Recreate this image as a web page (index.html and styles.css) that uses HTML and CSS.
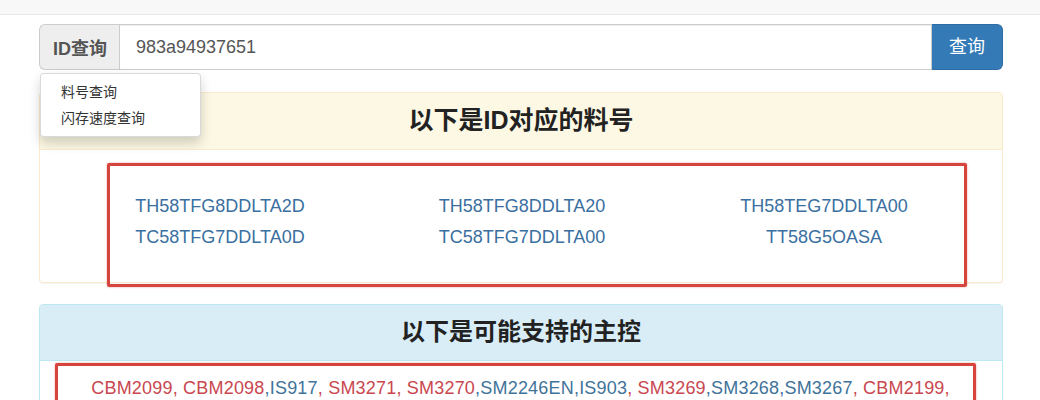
FILE: index.html
```html
<!DOCTYPE html>
<html lang="zh-CN">
<head>
<meta charset="utf-8">
<title>ID查询</title>
<link rel="stylesheet" href="styles.css">
</head>
<body>
<div class="topbar"></div>
<div class="container">
  <div class="search">
    <div class="input-group">
      <span class="addon">ID查询</span>
      <input class="field" type="text" value="983a94937651">
      <button class="btn">查询</button>
    </div>
    <ul class="dropdown">
      <li>料号查询</li>
      <li>闪存速度查询</li>
    </ul>
  </div>

  <div class="panel panel-warning">
    <div class="panel-heading">以下是ID对应的料号</div>
    <div class="panel-body body-parts">
      <div class="mark parts">
        <a>TH58TFG8DDLTA2D</a>
        <a>TH58TFG8DDLTA20</a>
        <a>TH58TEG7DDLTA00</a>
        <a>TC58TFG7DDLTA0D</a>
        <a>TC58TFG7DDLTA00</a>
        <a>TT58G5OASA</a>
      </div>
    </div>
  </div>

  <div class="panel panel-info">
    <div class="panel-heading">以下是可能支持的主控</div>
    <div class="panel-body body-ctrl">
      <div class="mark ctrl"><span class="r">CBM2099, CBM2098</span><span class="b">,IS917</span><span class="r">, SM3271, SM3270</span><span class="b">,SM2246EN,IS903</span><span class="r">, SM3269</span><span class="b">,SM3268,SM3267</span><span class="r">, CBM2199,</span></div>
    </div>
  </div>
</div>
</body>
</html>
```

FILE: styles.css
```css
* { box-sizing: border-box; }
html, body { margin: 0; padding: 0; background: #fff; }
body {
  font-family: "Liberation Sans", "Noto Sans CJK SC", sans-serif;
  color: #333;
  font-size: 14px;
  overflow: hidden;
  height: 400px;
}
.topbar {
  height: 15px;
  background: #f8f8f8;
  border-bottom: 1px solid #e7e7e7;
}
.container {
  width: 964px;
  margin: 9px 0 0 39px;
}
.search { position: relative; }
.input-group {
  display: flex;
  height: 46px;
}
.addon {
  display: flex;
  align-items: center;
  padding: 0 12px 0 13px;
  background: #eee;
  border: 1px solid #ccc;
  border-right: 0;
  border-radius: 6px 0 0 6px;
  font-size: 18px;
  font-weight: bold;
  color: #555;
}
.field {
  flex: 1;
  height: 46px;
  border: 1px solid #ccc;
  padding: 0 16px;
  font-family: "Liberation Sans", "Noto Sans CJK SC", sans-serif;
  font-size: 18px;
  color: #555;
  outline: none;
  box-shadow: inset 0 1px 1px rgba(0,0,0,.075);
}
.btn {
  width: 71px;
  height: 46px;
  border: 1px solid #2e6da4;
  border-left: 0;
  background: #337ab7;
  color: #fff;
  font-family: "Liberation Sans", "Noto Sans CJK SC", sans-serif;
  font-size: 18px;
  line-height: 40px;
  padding: 0 0 1px;
  border-radius: 0 6px 6px 0;
}
.dropdown {
  position: absolute;
  left: 1px;
  top: 49px;
  width: 161px;
  margin: 0;
  padding: 5px 0;
  list-style: none;
  background: #fff;
  border: 1px solid rgba(0,0,0,.15);
  border-radius: 4px;
  box-shadow: 0 6px 12px rgba(0,0,0,.175);
  z-index: 10;
}
.dropdown li {
  padding: 3px 20px;
  line-height: 20px;
  font-size: 14px;
  color: #333;
}
.panel {
  border: 1px solid transparent;
  border-radius: 4px;
  background: #fff;
  box-shadow: 0 1px 1px rgba(0,0,0,.05);
}
.panel-warning { margin-top: 22px; border-color: #faebcc; }
.panel-info { margin-top: 21px; border-color: #bce8f1; }
.panel-heading {
  text-align: center;
  font-size: 25px;
  font-weight: bold;
  color: #222;
  line-height: 27px;
  padding: 14px 0 15px;
  border-radius: 3px 3px 0 0;
}
.panel-warning .panel-heading { background: #fcf8e3; border-bottom: 1px solid #faebcc; }
.panel-info .panel-heading { background: #d9edf7; border-bottom: 1px solid #bce8f1; padding: 13px 0 15px; font-size: 24px; }
.mark {
  border: 3px solid #d5453e;
  border-radius: 2px;
  box-shadow: 0 0 2px rgba(217,66,59,.6);
}
.body-parts { padding: 13px 35px 0 67px; }
.parts {
  margin-bottom: -5px;
  display: grid;
  grid-template-columns: repeat(3, 220px);
  column-gap: 82px;
  padding: 25px 0 31px;
  font-size: 18px;
  line-height: 31px;
  text-align: center;
}
.parts a { color: #3a6f9f; }
.body-ctrl { padding: 2px 26px 0 15px; }
.ctrl {
  padding: 11px 0 20px 10px;
  font-size: 18px;
  line-height: 22px;
  letter-spacing: 0.2px;
  text-align: center;
  white-space: nowrap;
}
.r { color: #c9474f; }
.b { color: #3f7399; }
```
